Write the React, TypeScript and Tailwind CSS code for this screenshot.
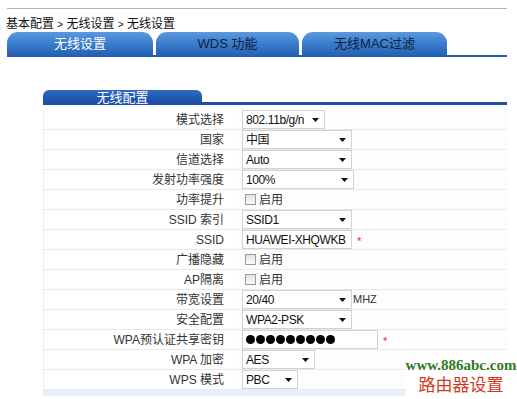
import * as React from "react";

type Row = {
  label: string;
  kind: "select" | "check" | "input" | "password";
  value?: string;
  width?: number;
  star?: boolean;
  suffix?: string;
};

const rows: Row[] = [
  { label: "模式选择", kind: "select", value: "802.11b/g/n", width: 83 },
  { label: "国家", kind: "select", value: "中国", width: 110 },
  { label: "信道选择", kind: "select", value: "Auto", width: 110 },
  { label: "发射功率强度", kind: "select", value: "100%", width: 112 },
  { label: "功率提升", kind: "check" },
  { label: "SSID 索引", kind: "select", value: "SSID1", width: 110 },
  { label: "SSID", kind: "input", value: "HUAWEI-XHQWKB", width: 110, star: true },
  { label: "广播隐藏", kind: "check" },
  { label: "AP隔离", kind: "check" },
  { label: "带宽设置", kind: "select", value: "20/40", width: 110, suffix: "MHZ" },
  { label: "安全配置", kind: "select", value: "WPA2-PSK", width: 110 },
  { label: "WPA预认证共享密钥", kind: "password", width: 136, star: true },
  { label: "WPA 加密", kind: "select", value: "AES", width: 73 },
  { label: "WPS 模式", kind: "select", value: "PBC", width: 56 },
];

const tabs = [
  { name: "无线设置", w: 146, active: true },
  { name: "WDS 功能", w: 143, active: false },
  { name: "无线MAC过滤", w: 145, active: false },
];

const Arrow = () => (
  <svg width="7" height="4" viewBox="0 0 7 4" className="shrink-0">
    <path d="M0 0 H7 L3.5 4 Z" fill="#111" />
  </svg>
);

const Field = ({ row }: { row: Row }) => {
  if (row.kind === "check") {
    return (
      <div className="flex items-center gap-[3px] pl-[3px]">
        <div className="w-[11px] h-[11px] border border-[#9a9a9a] bg-gradient-to-b from-[#e4e4e4] to-[#fafafa]" />
        <span>启用</span>
      </div>
    );
  }
  return (
    <div className="flex items-center">
      <div
        className="h-[19px] border border-[#d2d2d2] bg-white flex items-center justify-between pl-[3px] pr-[5px] text-[#111] overflow-hidden"
        style={{ width: row.width }}
      >
        {row.kind === "password" ? (
          <div className="flex gap-[1px]">
            {Array.from({ length: 9 }).map((_, i) => (
              <div key={i} className="w-[9px] h-[9px] rounded-full bg-black" />
            ))}
          </div>
        ) : (
          <span className="text-[12px] whitespace-nowrap tracking-[-0.4px]">{row.value}</span>
        )}
        {row.kind === "select" && <Arrow />}
      </div>
      {row.suffix && <span className="ml-[1px] text-[11px] text-[#333]">{row.suffix}</span>}
      {row.star && <span className="ml-[5px] text-[#d0304a] text-[11px] mt-[3px]">*</span>}
    </div>
  );
};

export default function App() {
  return (
    <div
      className="relative w-[517px] h-[399px] bg-white overflow-hidden text-[12px] text-[#333]"
      style={{ fontFamily: '"Liberation Sans", Arial, "Noto Sans CJK SC", sans-serif' }}
    >
      <div className="pt-[8px] pl-[7px] pr-[10px]">
        {/* top rule */}
        <div className="h-px bg-[#a7b6c6]" />
        {/* breadcrumb */}
        <div className="mt-[7px] -ml-[1px] h-[16px] leading-[16px] text-[#111]">
          基本配置 <span className="text-[10px]">&gt;</span> 无线设置 <span className="text-[10px]">&gt;</span> 无线设置
        </div>
        {/* tabs */}
        <div className="flex gap-[3px] h-[23px]">
          {tabs.map((t) => (
            <div
              key={t.name}
              className={
                "rounded-t-[11px] bg-gradient-to-b from-[#5b9ae0] via-[#3b7dcc] to-[#2563b4] flex items-center justify-center text-[13px] pt-[1px] " +
                (t.active ? "text-white" : "text-[#0d1f3c]")
              }
              style={{ width: t.w }}
            >
              {t.name}
            </div>
          ))}
        </div>
        <div className="h-[2px] bg-[#2a5fb0]" />

        {/* section */}
        <div className="mt-[33px] ml-[36px]">
          <div className="w-[159px] h-[12px] rounded-t-[6px] bg-gradient-to-b from-[#2f6cc2] to-[#1b4fa8] flex items-center justify-center text-white text-[13px] leading-none pt-[3px]">
            <span>无线配置</span>
          </div>
          <div className="h-[3px] bg-[#1f50a8]" />
          <div className="mt-[5px] border-l border-[#eeeeee]">
            {rows.map((r) => (
              <div key={r.label} className="flex h-[20px] border-b border-[#e9e9e9]">
                <div className="w-[195px] shrink-0 text-right pr-[15px] leading-[20px] text-[#333] bg-white">
                  {r.label}
                </div>
                <div className="flex-1 flex items-center pl-[3px] bg-[#fdfdfd]">
                  <Field row={r} />
                </div>
              </div>
            ))}
            <div className="h-[6px] bg-[#e9f0f8]" />
          </div>
        </div>
      </div>

      {/* watermark */}
      <div className="absolute left-[405px] top-[355px] w-[112px] h-[44px] bg-white flex flex-col items-center">
        <div
          className="text-[15px] font-bold text-[#2f7a1c] leading-[18px] mt-[1px]"
          style={{ fontFamily: '"Liberation Serif", "Times New Roman", serif' }}
        >
          www.886abc.com
        </div>
        <div className="text-[17px] text-[#d4381c] leading-[20px] tracking-[0px]" style={{ fontFamily: '"Noto Sans CJK SC", sans-serif' }}>
          路由器设置
        </div>
      </div>
    </div>
  );
}
